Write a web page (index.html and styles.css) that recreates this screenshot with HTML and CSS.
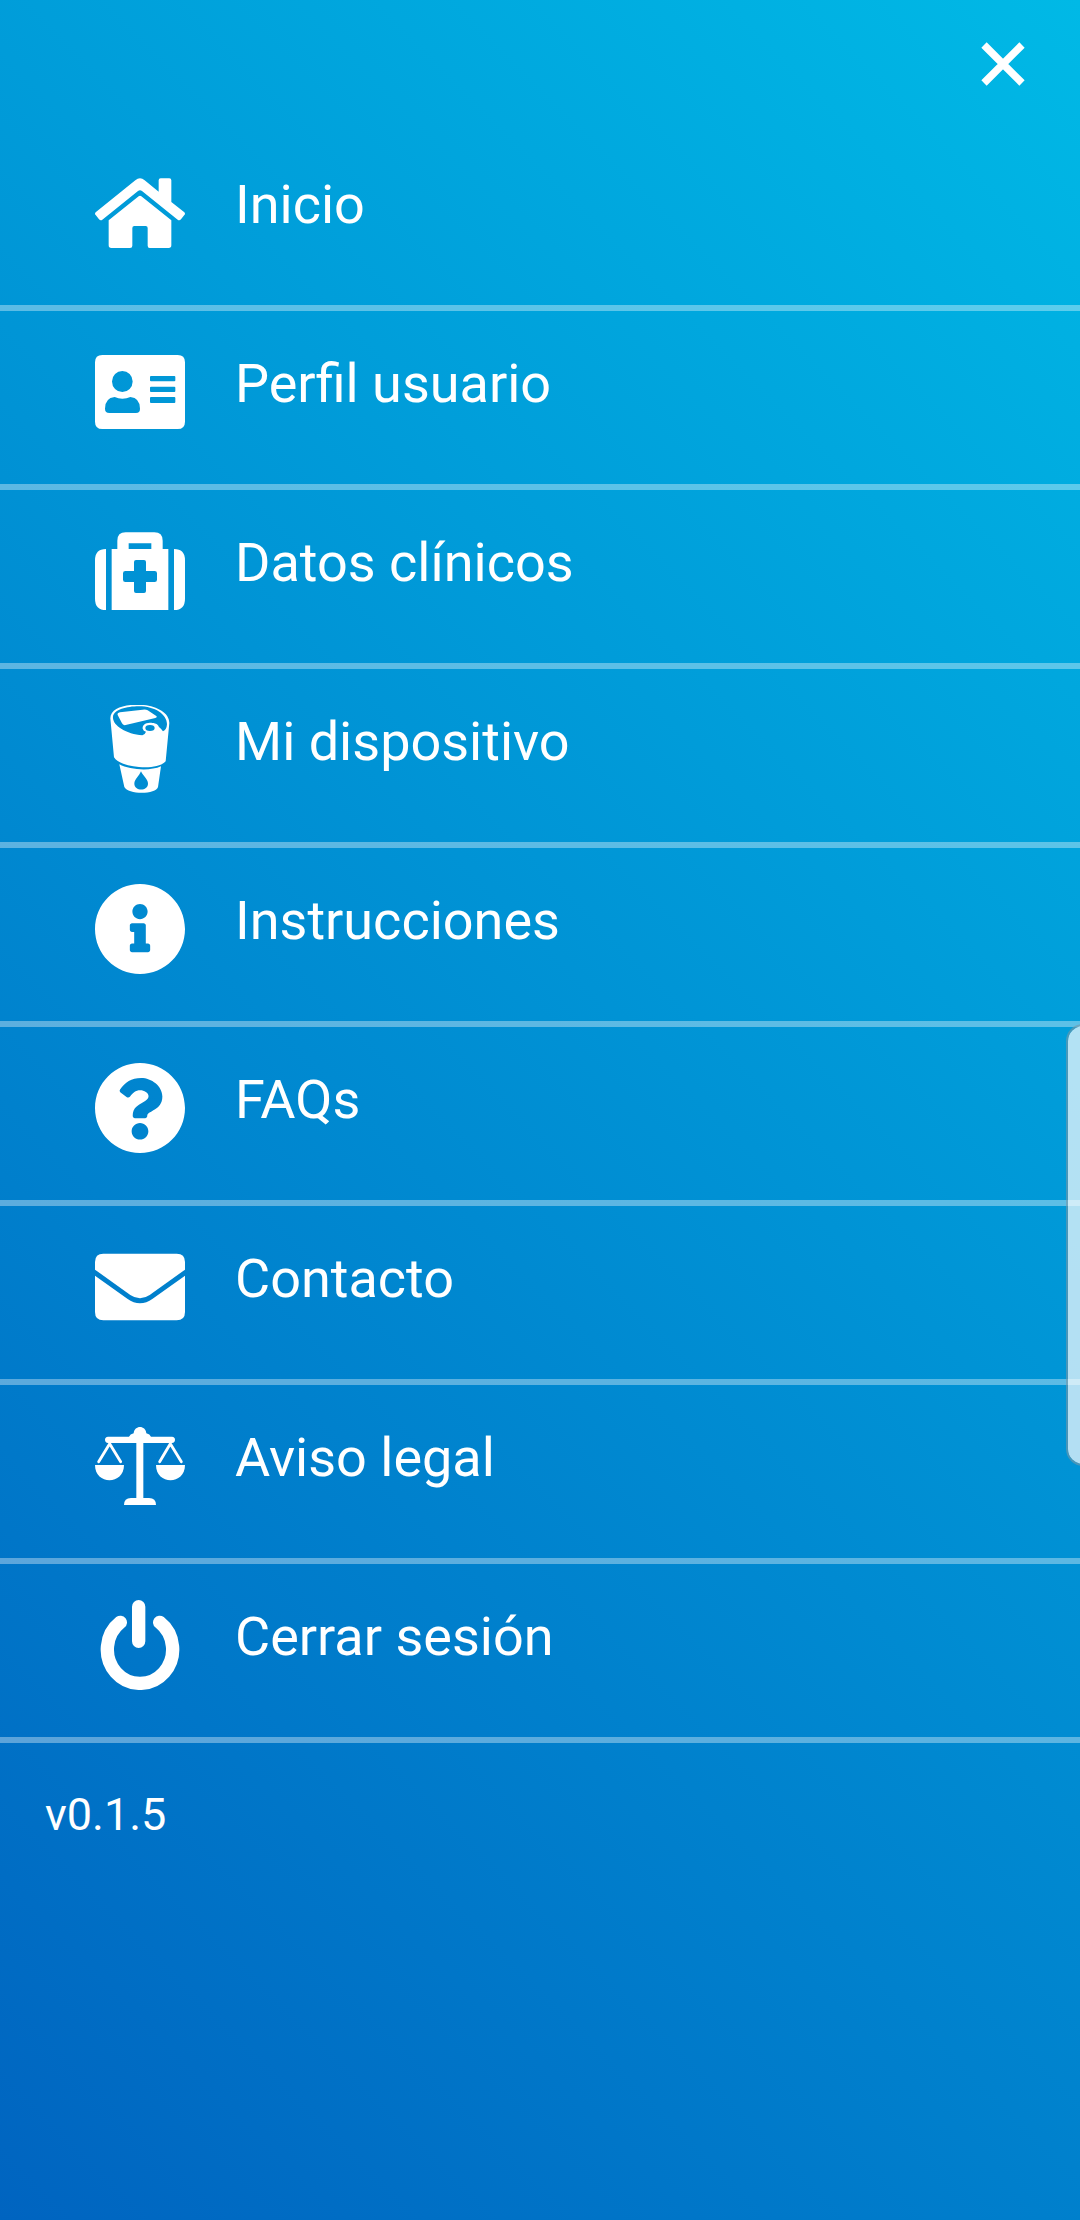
FILE: index.html
```html
<!DOCTYPE html>
<html lang="es">
<head>
<meta charset="utf-8">
<title>Menú</title>
<link rel="stylesheet" href="styles.css">
</head>
<body>
<header class="topbar">
  <button class="close" aria-label="Cerrar">
    <svg viewBox="0 0 44 44"><path d="M3 3L41 41M41 3L3 41" stroke="#fff" stroke-width="7.5"/></svg>
  </button>
</header>
<nav class="menu">
  <a class="item">
    <svg class="icon" viewBox="45 24 270 270"><path d="M47 157L166 61Q180 49 194 61L236 95V61Q236 55 242 55H268Q274 55 274 61V126L313 157Q317 161 313 165L303 178Q298 183 293 179L186 93Q180 88 174 93L67 179Q62 183 57 178L47 165Q43 161 47 157Z"/><path d="M86 181L176 109Q180 106 184 109L274 181V256Q274 264 266 264H209Q203 264 203 257V204Q203 198 197 198H163Q157 198 157 204V257Q157 264 150 264H94Q86 264 86 256Z"/></svg>
    <span class="label">Inicio</span>
  </a>
  <a class="item">
    <svg class="icon" viewBox="45 21 270 270"><path fill-rule="evenodd" d="M67 45H293Q315 45 315 67V245Q315 267 293 267H67Q45 267 45 245V67Q45 45 67 45ZM127 93A31 31.500 0 0 0 127 156A31 31.500 0 0 0 127 93ZM104 171Q75 174 75 206Q75 219 88 219H168Q180 219 180 206Q180 174 151 171Q140 176 127 176Q115 176 104 171ZM213 108Q210 108 210 111V121Q210 124 213 124H283Q286 124 286 121V111Q286 108 283 108ZM213 140Q210 140 210 143V153Q210 156 213 156H283Q286 156 286 153V143Q286 140 283 140ZM213 171Q210 171 210 174V186Q210 189 213 189H283Q286 189 286 186V174Q286 171 283 171Z"/></svg>
    <span class="label">Perfil usuario</span>
  </a>
  <a class="item">
    <svg class="icon" viewBox="45 18 270 270"><path fill-rule="evenodd" d="M95 87H112V62Q112 37 137 37H223Q248 37 248 62V87H265V270H95ZM146 70V87H214V70ZM168 120Q162 120 162 126V153H136Q129 153 129 160V179Q129 186 136 186H162V213Q162 219 168 219H192Q198 219 198 213V186H224Q231 186 231 179V160Q231 153 224 153H198V126Q198 120 192 120Z"/><path d="M78 87V270Q45 270 45 236V121Q45 87 78 87ZM282 87V270Q315 270 315 236V121Q315 87 282 87Z"/></svg>
    <span class="label">Datos clínicos</span>
  </a>
  <a class="item">
    <svg class="icon" viewBox="15 45 270 270"><path fill-rule="evenodd" d="M61 85C61 56 100 44 143 44C190 44 238 64 238 99L227 214C212 230 179 234 147 231C112 228 81 218 72 202ZM69 80C72 59 109 49 147 49C195 49 231 73 231 103Q230 119 219 124C214 115 206 112 205 107C201 100 190 98 180 98C163 99 157 107 158 116Q160 123 168 125Q165 134 157 136C108 132 66 106 69 80ZM166 114A14 9 0 0 0 194 114A14 9 0 0 0 166 114Z"/><path d="M83 75Q81 69 90 67L158 59Q167 57 173 61L200 79Q202 83 196 84L107 105Q99 107 96 100Z"/><path fill-rule="evenodd" d="M88 223C119 240 181 244 213 229L204 291C199 314 113 314 103 291ZM153 244C148 257 133 269 133 281C133 304 174 304 174 281C174 268 159 258 153 244Z"/></svg>
    <span class="label">Mi dispositivo</span>
  </a>
  <a class="item">
    <svg class="icon" viewBox="8 8 496 496"><path d="M256 8C119.043 8 8 119.083 8 256c0 136.997 111.043 248 248 248s248-111.003 248-248C504 119.083 392.957 8 256 8zm0 110c23.196 0 42 18.804 42 42s-18.804 42-42 42-42-18.804-42-42 18.804-42 42-42zm56 254c0 6.627-5.373 12-12 12h-88c-6.627 0-12-5.373-12-12v-24c0-6.627 5.373-12 12-12h12v-64h-12c-6.627 0-12-5.373-12-12v-24c0-6.627 5.373-12 12-12h64c6.627 0 12 5.373 12 12v100h12c6.627 0 12 5.373 12 12v24z"/></svg>
    <span class="label">Instrucciones</span>
  </a>
  <a class="item">
    <svg class="icon" viewBox="8 8 496 496"><path d="M504 256c0 136.997-111.043 248-248 248S8 392.997 8 256C8 119.083 119.043 8 256 8s248 111.083 248 248zM262.655 90c-54.497 0-89.255 22.957-116.549 63.758-3.536 5.286-2.353 12.415 2.715 16.258l34.699 26.31c5.205 3.947 12.621 3.008 16.665-2.122 17.864-22.658 30.113-35.797 57.303-35.797 20.429 0 45.698 13.148 45.698 32.958 0 14.976-12.363 22.667-32.534 33.976C247.128 238.528 216 254.941 216 296v4c0 6.627 5.373 12 12 12h56c6.627 0 12-5.373 12-12v-1.333c0-28.462 83.186-29.647 83.186-106.667 0-58.002-60.165-102-116.531-102zM256 338c-25.365 0-46 20.635-46 46 0 25.364 20.635 46 46 46s46-20.636 46-46c0-25.365-20.635-46-46-46z"/></svg>
    <span class="label">FAQs</span>
  </a>
  <a class="item">
    <svg class="icon" viewBox="45 36 270 270"><path d="M70 71H290Q315 71 315 96V119L209 195Q180 215 151 195L45 119V96Q45 71 70 71Z"/><path d="M45 137L142 206Q180 233 218 206L315 137V246Q315 271 290 271H70Q45 271 45 246Z"/></svg>
    <span class="label">Contacto</span>
  </a>
  <a class="item">
    <svg class="icon" viewBox="45 63 270 270"><path d="M84 110H147Q150 102 161 100C163 75 197 75 199 100Q210 102 213 110H276Q285 111 285 119Q285 128 276 129H190V294H207Q228 294 228 315H132Q132 294 153 294H169V129H84Q75 128 75 119Q75 111 84 110ZM45 195H132C132 256 45 256 45 195ZM228 195H315C315 256 228 256 228 195Z"/><path d="M56 185L89 131L122 185M239 185L271 131L304 185" fill="none" stroke="#fff" stroke-width="8.500" stroke-linecap="round" stroke-linejoin="round"/></svg>
    <span class="label">Aviso legal</span>
  </a>
  <a class="item">
    <svg class="icon" viewBox="45 600 270 270"><path d="M176 620V724M121 667A98 101.800 0 1 0 239 667" fill="none" stroke="#fff" stroke-width="40" stroke-linecap="round"/></svg>
    <span class="label">Cerrar sesión</span>
  </a>
</nav>
<footer class="version">v0.1.5</footer>
<div class="edge-handle"></div>
</body>
</html>
```
FILE: styles.css
```css
* {
  box-sizing: border-box;
}

body {
  margin: 0;
  position: relative;
  width: 1080px;
  height: 2220px;
  overflow: hidden;
  color: #fff;
  font-family: Roboto, sans-serif;
  background: linear-gradient(45deg, #0064c0, #00b9e6);
}

.topbar {
  height: 132px;
  display: flex;
  justify-content: flex-end;
  padding: 42px 55px 0 0;
}

.close {
  width: 44px;
  height: 44px;
  padding: 0;
  border: 0;
  background: none;
}

.close svg {
  display: block;
}

.menu {
  display: flex;
  flex-direction: column;
}

.item {
  display: flex;
  align-items: flex-start;
  gap: 50px;
  height: 179px;
  padding: 36px 0 0 95px;
  border-bottom: 6px solid rgba(255, 255, 255, 0.36);
}

.icon {
  width: 90px;
  height: 90px;
  fill: #fff;
}

.label {
  font-size: 54px;
  line-height: 74px;
}

.version {
  padding: 45px 0 0 45px;
  font-size: 45px;
  line-height: 54px;
}

.edge-handle {
  position: absolute;
  top: 1024px;
  right: -20px;
  width: 34px;
  height: 442px;
  border: 2px solid rgba(120, 150, 165, 0.6);
  border-radius: 17px;
  background: rgba(255, 255, 255, 0.7);
  background-clip: padding-box;
}
```
